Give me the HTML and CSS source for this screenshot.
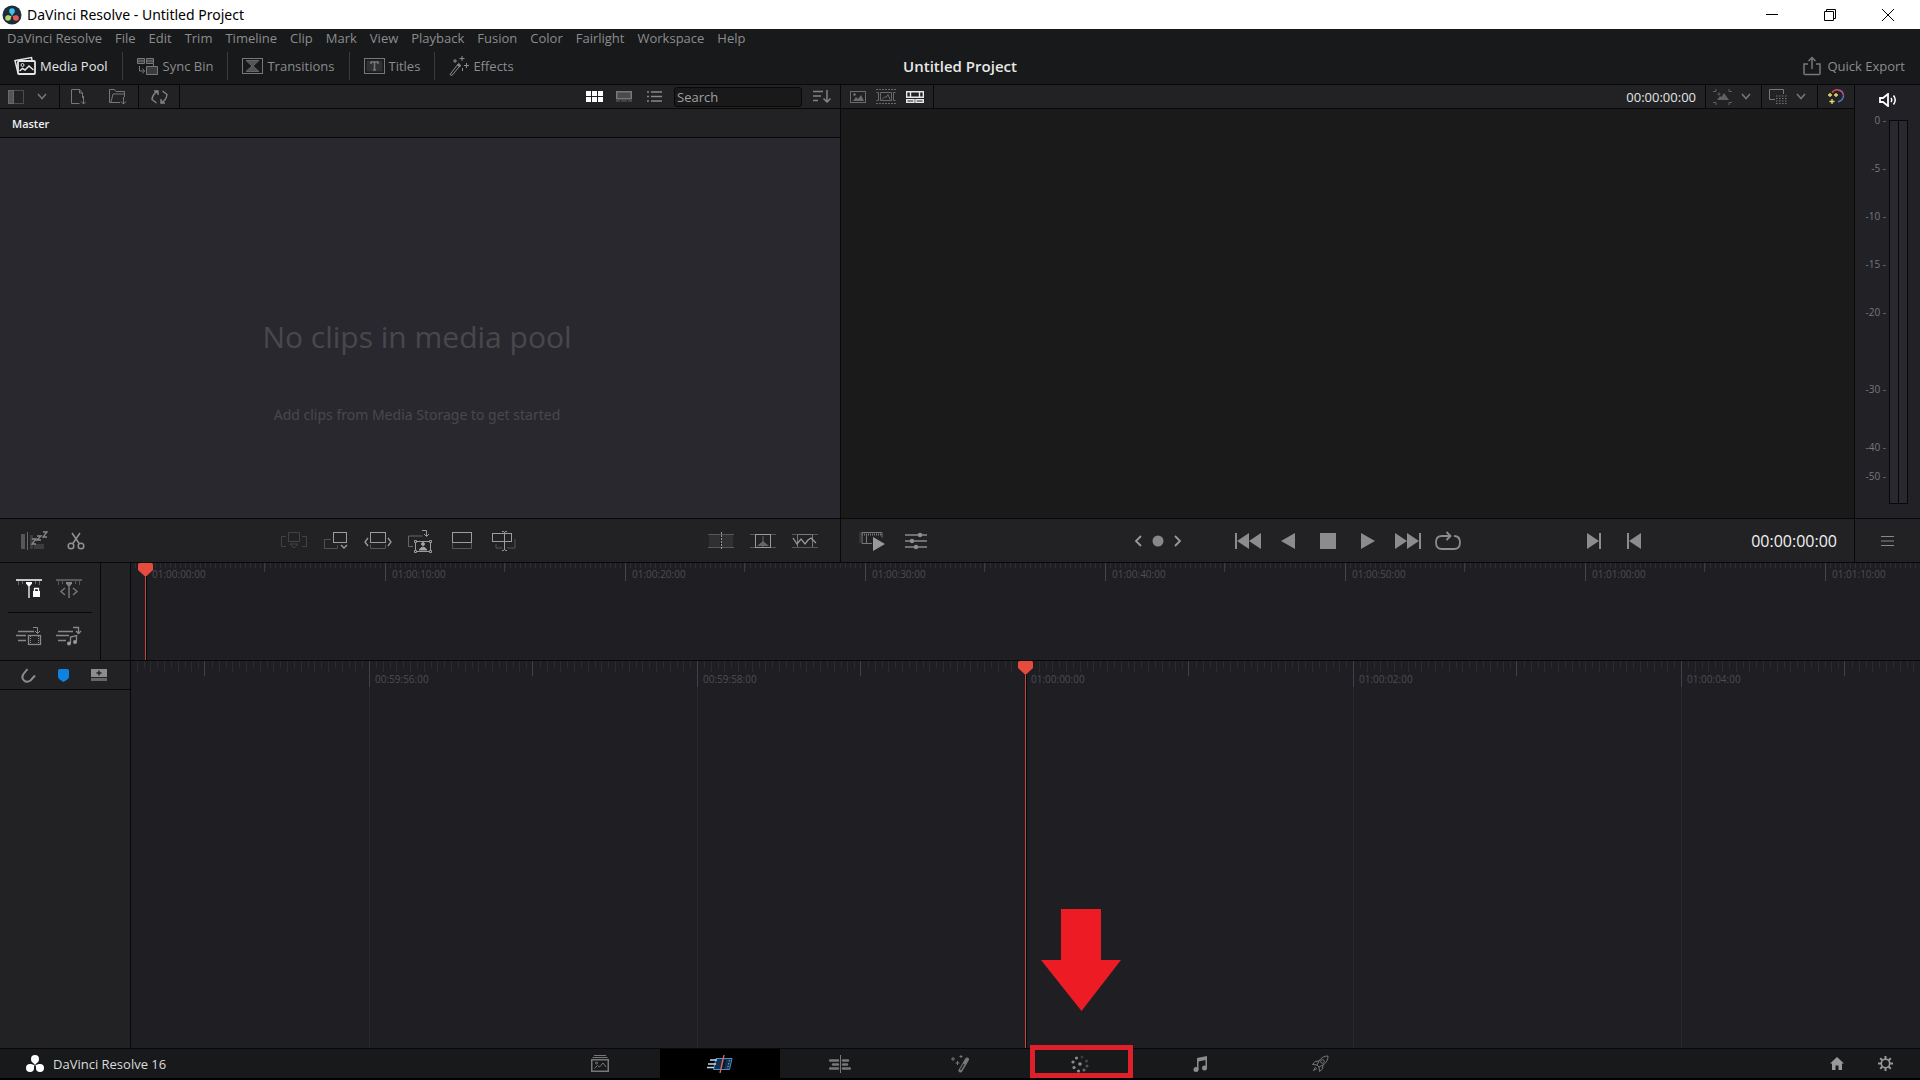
FILE: index.html
```html
<!DOCTYPE html>
<html lang="en">
<head>
<meta charset="utf-8">
<title>DaVinci Resolve - Untitled Project</title>
<link rel="stylesheet" href="styles.css">
</head>
<body>
<div class="app">
  <header class="titlebar">
    <svg class="app-logo" width="20" height="20" viewBox="0 0 20 20"><circle cx="10" cy="10" r="9.500" fill="#1d2c3a"/><circle cx="10" cy="6" r="2.800" fill="#3cc5ea"/><path d="M7.500 7L10 11l2.500-4z" fill="#3cc5ea"/><circle cx="6" cy="13" r="2.800" fill="#b9d46a"/><path d="M5 10.500L9.500 11 8 15z" fill="#b9d46a"/><circle cx="14" cy="13" r="2.800" fill="#ef5558"/><path d="M15 10.500L10.500 11 12 15z" fill="#ef5558"/></svg>
    <h1 class="window-title">DaVinci Resolve - Untitled Project</h1>
    <div class="window-buttons">
      <button aria-label="Minimize"><svg width="12" height="12" viewBox="0 0 12 12"><path d="M0 5.500h12" stroke="#000"/></svg></button>
      <button aria-label="Restore"><svg width="12" height="12" viewBox="0 0 12 12"><path d="M.5 2.500h9v9h-9zM2.500 2.500v-2h9v9h-2" stroke="#000" fill="none"/></svg></button>
      <button aria-label="Close"><svg width="12" height="12" viewBox="0 0 12 12"><path d="M0 0L12 12M12 0L0 12" stroke="#000"/></svg></button>
    </div>
  </header>

  <nav class="menubar" aria-label="Application menu">
    <button>DaVinci Resolve</button><button>File</button><button>Edit</button><button>Trim</button><button>Timeline</button><button>Clip</button><button>Mark</button><button>View</button><button>Playback</button><button>Fusion</button><button>Color</button><button>Fairlight</button><button>Workspace</button><button>Help</button>
  </nav>

  <div class="toolbar">
    <div class="toolbar-left">
      <button class="active"><svg width="22" height="20" viewBox="0 0 22 20" fill="none" stroke="currentColor"><path d="M4 17L1 4.500 17.500 1.500l.5 2.500" stroke-width="1.500"/><rect x="4" y="5" width="17" height="13" rx="1" stroke-width="1.800" fill="#17191a"/><circle cx="8.500" cy="9" r="1.500"/><path d="M5.500 15l3-2.500 2.500 1.500 4-4 4.500 4" stroke-width="1.500"/></svg>Media Pool</button>
      <button><svg width="22" height="18" viewBox="0 0 22 18" fill="#3a3b3c" stroke="#77787a"><path d="M.5 1.500h7v5h-7zM9.500 1.500h7v5h-7zM9.500 9.500h11v8h-11z"/><path d="M16.500 7v3M.5 4h7M9.500 4h7" /><path d="M2.500 9v5h5M5.500 11.500l2 2.500-2 2.500" fill="none"/></svg>Sync Bin</button>
      <button><svg width="21" height="16" viewBox="0 0 21 16" fill="none" stroke="#77787a"><rect x=".5" y=".5" width="20" height="15"/><path d="M4 2.500h13L11 8l6 5.500H4L10 8z" fill="#555" stroke="#666"/></svg>Transitions</button>
      <button><svg width="21" height="16" viewBox="0 0 21 16" fill="none" stroke="#77787a"><rect x=".5" y=".5" width="20" height="15"/><rect x="2.500" y="2.500" width="16" height="11" fill="#303132" stroke="none"/><path d="M7 6V4h7v2M10.500 4v8M9 12h3" stroke-width="1.500"/></svg>Titles</button>
      <button><svg width="20" height="20" viewBox="0 0 20 20" fill="none" stroke="currentColor"><path d="M1 18.500l8.500-11 2 1.500L3 19.500z"/><path d="M8.500 8.500l3 2" stroke-width="2"/><path d="M13 0v5M10.500 2.500h5M6 3v4M4 5h4M17.500 7v5M15 9.500h5M13.500 12v3"/></svg>Effects</button>
    </div>
    <h2 class="project-title">Untitled Project</h2>
    <button class="export"><svg width="18" height="20" viewBox="0 0 18 20" fill="none" stroke="#77787a" stroke-width="1.500"><path d="M5 8H1v9.500q0 1 1 1h14q1 0 1-1V8h-4M9 13V2M5.500 5L9 1.500 12.500 5"/></svg>Quick Export</button>
  </div>

  <main class="workspace">
    <section class="media" aria-label="Media pool">
      <div class="subbar">
        <div class="cell cell-bins">
          <button aria-label="Bin list"><svg width="16" height="14" viewBox="0 0 16 14" fill="none" stroke="#68686b"><rect x=".5" y=".5" width="15" height="13" stroke="#4c4c50"/><rect x=".5" y=".5" width="5" height="13" fill="#555558"/></svg></button>
          <button aria-label="Bin options"><svg class="chev" width="10" height="7" viewBox="0 0 10 7"><path d="M1 1l4 4.500L9 1" fill="none" stroke="#77777a" stroke-width="1.500"/></svg></button>
        </div>
        <div class="cell cell-import">
          <button aria-label="Import media"><svg width="15" height="16" viewBox="0 0 15 16" fill="none" stroke="#77777a"><path d="M8.500 14.500h-8V.5h8l3 3.500v5M8.500.5V4h3M12.500 7v8M10 12.500l2.500 2.500 2.500-2.500"/></svg></button>
          <button aria-label="Import folder"><svg width="18" height="16" viewBox="0 0 18 16" fill="none" stroke="#77777a"><path d="M11 13.500H.5V.5h5l1.500 2h8.500V8M2 13L4 5h12M14.500 8v7M12 12.500l2.500 2.500 2.500-2.500"/></svg></button>
        </div>
        <div class="cell cell-sync">
          <button aria-label="Sync"><svg width="17" height="14" viewBox="0 0 17 14" fill="none" stroke="#838386" stroke-width="1.400"><path d="M5.500 13L1 9.500Q1.500 4 6.500 1.500M3 1h4v4M11.500 1L16 4.500Q15.500 10 10.500 12.500M14 13h-4V9"/></svg></button>
        </div>
        <div class="views">
          <button aria-label="Thumbnail view"><svg width="17" height="11" viewBox="0 0 17 11" fill="#fff"><path d="M0 0h5v5H0zM6 0h5v5H6zM12 0h5v5h-5zM0 6h5v5H0zM6 6h5v5H6zM12 6h5v5h-5z"/></svg></button>
          <button aria-label="Strip view"><svg width="16" height="11" viewBox="0 0 16 11"><rect x=".75" y=".75" width="14.500" height="7" fill="#4a4a4d" stroke="#77777a" stroke-width="1.500"/><path d="M0 10h4M5 10h6M12 10h4" stroke="#68686b"/></svg></button>
          <button aria-label="List view"><svg width="15" height="11" viewBox="0 0 15 11" stroke="#88888b" stroke-width="1.500"><path d="M0 1h2M4 1h11M0 5.500h2M4 5.500h11M0 10h2M4 10h11"/></svg></button>
        </div>
        <input class="search" type="text" placeholder="Search" aria-label="Search">
        <button class="sort" aria-label="Sort"><svg width="18" height="13" viewBox="0 0 18 13" fill="none" stroke="#838386" stroke-width="1.500"><path d="M0 1.500h10M0 6h8M0 10.500h5M14 0v11.500M10.500 8.500L14 12l3.500-3.500"/></svg></button>
      </div>
      <h3 class="bin-name">Master</h3>
      <div class="empty">
        <p class="empty-title">No clips in media pool</p>
        <p class="empty-note">Add clips from Media Storage to get started</p>
      </div>
    </section>

    <section class="viewer" aria-label="Viewer">
      <div class="subbar">
        <div class="cell cell-modes">
          <button aria-label="Source clip"><svg width="16" height="12" viewBox="0 0 16 12" fill="none" stroke="#6b6b6e"><rect x=".5" y=".5" width="15" height="11"/><path d="M3 10l3-4 2 2 3-4 3 6z" fill="#6b6b6e" stroke="none"/><circle cx="4.500" cy="3.500" r="1" fill="#6b6b6e"/></svg></button>
          <button aria-label="Source tape"><svg width="20" height="15" viewBox="0 0 20 15" fill="none" stroke="#68686b"><path d="M0 .5h20M0 14.500h20" stroke-dasharray="2 1"/><path d="M.5 3.500h2v8h-2M19.500 3.500h-2v8h2M4.500 3.500h11v8h-11zM6 10.500l3-3 1 1 2-3 2 5"/></svg></button>
          <button aria-label="Timeline"><svg width="18" height="12" viewBox="0 0 18 12" fill="none" stroke="#e8e8e8" stroke-width="1.400"><path d="M.7.7h16.600v5.600H.7zM4.500.7v5.600M13.500.7v5.600M.7 8.700h7.300v2.600H.7zM10 8.700h7.300v2.600H10z"/></svg></button>
        </div>
        <output class="timecode-small">00:00:00:00</output>
        <div class="cell cell-drop">
          <button aria-label="Transform"><svg width="19" height="16" viewBox="0 0 19 16" fill="none" stroke="#606063"><path d="M0 2.500h3V0M19 2.500h-3V0M0 13.500h3V16M19 13.500h-3V16"/><path d="M4 11l3-4 1.500 1L11 4l5 7z" fill="#606063" stroke="none"/><circle cx="6" cy="5" r="1"/></svg></button>
          <button aria-label="Transform options"><svg class="chev" width="10" height="7" viewBox="0 0 10 7"><path d="M1 1l4 4.500L9 1" fill="none" stroke="#77777a" stroke-width="1.500"/></svg></button>
        </div>
        <div class="cell cell-drop">
          <button aria-label="Overlay"><svg width="18" height="15" viewBox="0 0 18 15" fill="none" stroke="#77777a"><path d="M6 10.500H.5V.5h14V5"/><path d="M7 7h11M7 9.500h11M7 12h11M7 14.500h11" stroke-dasharray="1.500 1.500"/></svg></button>
          <button aria-label="Overlay options"><svg class="chev" width="10" height="7" viewBox="0 0 10 7"><path d="M1 1l4 4.500L9 1" fill="none" stroke="#77777a" stroke-width="1.500"/></svg></button>
        </div>
        <div class="cell cell-auto">
          <button aria-label="Auto color"><svg width="18" height="16" viewBox="0 0 18 16" fill="none" stroke-width="1.500"><path d="M5 3.500Q8 0 11 1" stroke="#e14b38"/><path d="M11 1Q16 1.500 16.500 6.500" stroke="#b254a4"/><path d="M16.500 6.500Q16.500 11 11 13" stroke="#4c78c4"/><path d="M3 4v4M1 6h4M9 4v4M7 6h4M5 10v5M2.500 12.500h5" stroke="#e7dd68" stroke-width="1.300"/></svg></button>
        </div>
      </div>
      <div class="screen"></div>
    </section>

    <aside class="audio" aria-label="Audio level">
      <button class="speaker" aria-label="Mute"><svg width="18" height="14" viewBox="0 0 18 14" fill="none" stroke="#fff" stroke-width="1.800"><path d="M1 5v4h3l5 4V1L4 5z"/><path d="M12 5q1.500 2 0 4M14.500 2.500q3.500 4.500 0 9" stroke-width="1.500"/></svg></button>
      <div class="meter">
        <div class="scale"><span>0 -</span><span>-5 -</span><span>-10 -</span><span>-15 -</span><span>-20 -</span><span>-30 -</span><span>-40 -</span><span>-50 -</span></div>
        <div class="bars"><i></i><i></i></div>
      </div>
    </aside>
  </main>

  <div class="controls">
    <div class="edit-tools">
      <div class="group">
        <button aria-label="Boring detector"><svg width="28" height="20" viewBox="0 0 28 20" fill="none" stroke="#69696c"><path d="M1 3h4v15H1z" fill="#565659" stroke="none"/><path d="M7.500 1v18"/><path d="M10 4h3v14h-3zM14 13h10v5H14z" fill="#3c3c3f" stroke="none"/><path d="M12 8h4l-4 5h4M17 5h4l-4 4h4M23 1h4l-4 5h4" stroke="#88888b" stroke-width="1.300"/></svg></button>
        <button aria-label="Split clips"><svg width="18" height="18" viewBox="0 0 18 18" fill="none" stroke="#919194" stroke-width="1.500"><circle cx="4" cy="14" r="2.800"/><circle cx="14" cy="14" r="2.800"/><path d="M5 1l7.500 11M13 1L5.500 12"/></svg></button>
      </div>
      <div class="group">
        <button aria-label="Smart insert"><svg width="26" height="18" viewBox="0 0 26 18" fill="none" stroke="#424245"><path d="M7.500.5h11v9h-11zM5 4.500H.5v10H5M21 4.500h4.500v10H21M9 12l4 4 4-4z"/></svg></button>
        <button aria-label="Append"><svg width="26" height="18" viewBox="0 0 26 18" fill="none" stroke="#9c9c9f"><rect x="10.500" y=".5" width="13" height="10"/><path d="M8 7.500H1.500v9h13V13" stroke="#4f4f52"/><path d="M18 13l3 3 3-3" stroke-width="1.300"/></svg></button>
        <button aria-label="Ripple overwrite"><svg width="28" height="18" viewBox="0 0 28 18" fill="none" stroke="#9c9c9f"><rect x="6.500" y=".5" width="15" height="10"/><path d="M6.500 12.500v4h15v-4" stroke="#55555a"/><path d="M4 6L1 10l3 4M24 6l3 4-3 4" stroke-width="1.300"/></svg></button>
        <button aria-label="Close up"><svg width="26" height="24" viewBox="0 0 26 24" fill="none" stroke="#9c9c9f"><path d="M6 17.500H1.500V7h14" stroke="#66666a"/><path d="M15 1.500h4.500V7M17 5l2.500 2.500L22 5"/><rect x="8.500" y="12.500" width="15" height="10"/><circle cx="16" cy="15" r="1.500" fill="#aaa"/><path d="M12 21q4-6 8 0z" fill="#aaa"/><path d="M7.500 11.500h2v2h-2zM22.500 11.500h2v2h-2zM7.500 21.500h2v2h-2zM22.500 21.500h2v2h-2z" fill="#222225"/></svg></button>
        <button aria-label="Place on top"><svg width="22" height="18" viewBox="0 0 22 18" fill="none" stroke="#9c9c9f"><rect x="1.500" y=".5" width="19" height="10"/><path d="M1.500 11v5.500h19V11" stroke="#55555a"/></svg></button>
        <button aria-label="Source overwrite"><svg width="26" height="20" viewBox="0 0 26 20" fill="none" stroke="#9c9c9f"><rect x="1.500" y="2.500" width="19" height="8"/><path d="M5 13v4h6M16 17h8V8" stroke="#55555a"/><path d="M13.500 1v18M11 .5h1q1 0 1.500 1 .5-1 1.500-1h1M11 19.500h1q1 0 1.500-1 .5 1 1.500 1h1"/></svg></button>
      </div>
      <div class="group">
        <button aria-label="Cut"><svg width="26" height="18" viewBox="0 0 26 18" fill="none"><path d="M1 3h11v12H1z" fill="#303033"/><path d="M14 3h11v12H14z" fill="#303033"/><path d="M0 2.500h26M0 15.500h26" stroke="#55555a"/><path d="M13.500 0v18" stroke="#99999c" stroke-dasharray="2 1"/></svg></button>
        <button aria-label="Dissolve"><svg width="26" height="18" viewBox="0 0 26 18" fill="none" stroke="#99999c"><path d="M0 2.500h26M0 15.500h26" stroke="#55555a"/><rect x="5.500" y="2.500" width="15" height="13"/><path d="M7 14l6-5 6 5z" fill="#66666a" stroke="none"/><path d="M13 4v11" stroke="#66666a"/></svg></button>
        <button aria-label="Smooth cut"><svg width="26" height="18" viewBox="0 0 26 18" fill="none" stroke="#99999c"><path d="M0 2.500h26M0 15.500h26" stroke="#55555a"/><path d="M5.500 15V2.500h15V15" stroke="#77777a"/><path d="M1 6l4 6 4-5 4 5 3-4 3-2 5 5" stroke-width="1.300"/></svg></button>
      </div>
    </div>
    <div class="transport">
      <div class="group wide">
        <button aria-label="Fast review"><svg width="26" height="20" viewBox="0 0 26 20" fill="none" stroke="#77777a"><path d="M3 1.500h20v5M3 1v11.500h10M7.500 4v8"/><path d="M3 3.500h20" stroke-dasharray="1 1" stroke-width="2"/><path d="M1 1v11" stroke="#444"/><path d="M14 6l12 7-12 7z" fill="#99999c" stroke="none"/></svg></button>
        <button aria-label="Tools"><svg width="22" height="18" viewBox="0 0 22 18" stroke="#8c8c8f" stroke-width="1.500" fill="#9c9c9f"><path d="M0 3h22M0 9h22M0 15h22"/><circle cx="15" cy="3" r="1.500"/><circle cx="7" cy="9" r="1.500"/><circle cx="11" cy="15" r="1.500"/></svg></button>
      </div>
      <div class="group jog">
        <button aria-label="Previous edit"><svg width="8" height="12" viewBox="0 0 8 12" fill="none" stroke="#99999c" stroke-width="1.800"><path d="M7 1L2 6l5 5"/></svg></button>
        <button aria-label="Jog"><svg width="12" height="12" viewBox="0 0 12 12"><circle cx="6" cy="6" r="5.500" fill="#88888b"/></svg></button>
        <button aria-label="Next edit"><svg width="8" height="12" viewBox="0 0 8 12" fill="none" stroke="#99999c" stroke-width="1.800"><path d="M1 1l5 5-5 5"/></svg></button>
      </div>
      <div class="group play">
        <button aria-label="Go to start"><svg width="26" height="16" viewBox="0 0 26 16" fill="#8c8c8f"><path d="M0 0h2v16H0zM2 8L14 0v16zM14 8L26 0v16z"/></svg></button>
        <button aria-label="Play reverse"><svg width="14" height="16" viewBox="0 0 14 16" fill="#8c8c8f"><path d="M0 8L14 0v16z"/></svg></button>
        <button aria-label="Stop"><svg width="16" height="16" viewBox="0 0 16 16" fill="#8c8c8f"><path d="M0 0h16v16H0z"/></svg></button>
        <button aria-label="Play"><svg width="14" height="16" viewBox="0 0 14 16" fill="#8c8c8f"><path d="M0 0l14 8-14 8z"/></svg></button>
        <button aria-label="Go to end"><svg width="26" height="16" viewBox="0 0 26 16" fill="#8c8c8f"><path d="M24 0h2v16h-2zM0 0l12 8-12 8zM12 0l12 8-12 8z"/></svg></button>
        <button aria-label="Loop"><svg width="26" height="20" viewBox="0 0 26 20" fill="none" stroke="#8c8c8f" stroke-width="1.800"><path d="M19 5q6 0 6 6.500T19 18H7q-6 0-6-6.500T7 5h8M11.500 1L15.500 5l-4 4"/></svg></button>
      </div>
      <div class="group play">
        <button aria-label="Next clip"><svg width="14" height="16" viewBox="0 0 14 16" fill="#8c8c8f"><path d="M0 0l12 8-12 8zM12 0h2v16h-2z"/></svg></button>
        <button aria-label="Previous clip"><svg width="14" height="16" viewBox="0 0 14 16" fill="#8c8c8f"><path d="M14 0L2 8l12 8zM0 0h2v16H0z"/></svg></button>
      </div>
      <output class="timecode">00:00:00:00</output>
    </div>
    <div class="options">
      <button aria-label="Timeline options"><svg width="13" height="10" viewBox="0 0 13 10" stroke="#88888b"><path d="M0 .5h13M0 5h13M0 9.500h13"/></svg></button>
    </div>
  </div>

  <section class="overview" aria-label="Timeline overview">
    <div class="timeline-tools">
      <div class="tool-row">
        <button aria-label="Lock playhead"><svg width="26" height="20" viewBox="0 0 26 20" fill="none" stroke="#fff"><path d="M0 1h26" stroke-width="1.500"/><path d="M2.500 2v4M6.500 2v3M19.500 2v3M23.500 2v4" stroke="#66666a"/><path d="M10 3h6v1.500L14 7h-2l-2-2.500z" fill="#fff" stroke="none"/><path d="M13 4v15" stroke-width="1.300"/><path d="M17 12h7v6h-7z" fill="#fff" stroke="none"/><path d="M18.500 12V9.500h4V12" stroke-width="1.300"/></svg></button>
        <button aria-label="Free playhead"><svg width="26" height="20" viewBox="0 0 26 20" fill="none" stroke="#77777a"><path d="M0 1h26" stroke-width="1.300"/><path d="M2.500 2v4M6.500 2v3M19.500 2v3M23.500 2v4" stroke="#55555a"/><path d="M10 3h6v1.500L14 7h-2l-2-2.500z" fill="#88888b" stroke="none"/><path d="M13 4v15M9 9l-4 3.500L9 16M17 9l4 3.500-4 3.500" stroke-width="1.500"/></svg></button>
      </div>
      <div class="tool-row">
        <button aria-label="Add video only"><svg width="26" height="20" viewBox="0 0 26 20" fill="none" stroke="#88888b"><path d="M2 5.500h16M0 9.500h10M2 14.500h8" stroke-width="1.500"/><path d="M17 1.500h4.500V7M19 5l2.500 2.500L24 5"/><rect x="12.500" y="9.500" width="12" height="9" stroke-width="1.300"/><path d="M14.500 10v8M22.500 10v8" stroke-dasharray="1 1"/></svg></button>
        <button aria-label="Add audio only"><svg width="26" height="20" viewBox="0 0 26 20" fill="none" stroke="#88888b"><path d="M2 5.500h15M0 9.500h13M2 14.500h8" stroke-width="1.500"/><path d="M17 1.500h5.500V7M20 5l2.500 2.500L25 5M14.500 17v-6l6-1.500V15" stroke-width="1.300"/><circle cx="13" cy="17.500" r="2" fill="#99999c" stroke="none"/><circle cx="19" cy="16" r="2" fill="#99999c" stroke="none"/></svg></button>
      </div>
    </div>
    <div class="track-gutter"></div>
    <div class="ruler ruler-full">
      <svg class="ticks" width="100%" height="20"><defs><pattern id="full" x="14" y="0" width="240" height="20" patternUnits="userSpaceOnUse"><path d="M.5 0v18" stroke="#45454a"/><path d="M119.500 0v9" stroke="#3a3a3f"/><path d="M5 2.500h235" stroke="#2e2e32" stroke-width="5" stroke-dasharray="1 4"/></pattern></defs><rect width="100%" height="20" fill="url(#full)"/></svg>
      <div class="labels"><span>01:00:00:00</span><span>01:00:10:00</span><span>01:00:20:00</span><span>01:00:30:00</span><span>01:00:40:00</span><span>01:00:50:00</span><span>01:01:00:00</span><span>01:01:10:00</span></div>
      <div class="playhead"><svg width="15" height="14" viewBox="0 0 15 14"><path d="M0 1.500Q0 0 1.500 0h12Q15 0 15 1.500V7l-7.500 7L0 7z" fill="#e64b3d"/></svg></div>
    </div>
  </section>

  <section class="detail" aria-label="Timeline">
    <div class="tracks">
      <div class="track-tools">
        <button aria-label="Snapping"><svg width="15" height="15" viewBox="0 0 15 15" fill="none" stroke="#8c8c8f" stroke-width="2"><path d="M6.500 1L2.500 6Q0 10 3 12.500t6.500 0L14 7.500"/></svg></button>
        <button aria-label="Markers"><svg width="11" height="13" viewBox="0 0 11 13" fill="#0d82e0"><path d="M0 1.500Q0 0 1.500 0h8Q11 0 11 1.500V8q0 2-5.500 5Q0 10 0 8z"/></svg></button>
        <button aria-label="Add track"><svg width="16" height="12" viewBox="0 0 16 12"><path d="M0 0h16v8H0z" fill="#8c8c8f"/><path d="M0 9h16v3H0z" fill="#66666a"/><path d="M8 1.500v5M5.500 4h5" stroke="#222225" stroke-width="1.500"/></svg></button>
      </div>
    </div>
    <div class="ruler ruler-zoom">
      <svg class="ticks" width="100%" height="100%"><defs>
        <pattern id="zoom" x="238" y="0" width="328" height="26" patternUnits="userSpaceOnUse"><path d="M.5 0v26M163.500 0v15" stroke="#404045"/><path d="M7.500 0v7M21.500 0v7M34.500 0v7M48.500 0v7M62.500 0v7M75.500 0v7M89.500 0v7M103.500 0v7M116.500 0v7M130.500 0v7M144.500 0v7M157.500 0v7M171.500 0v7M185.500 0v7M198.500 0v7M212.500 0v7M226.500 0v7M239.500 0v7M253.500 0v7M267.500 0v7M280.500 0v7M294.500 0v7M308.500 0v7M321.500 0v7M14.500 0v11M27.500 0v11M41.500 0v11M55.500 0v11M68.500 0v11M82.500 0v11M96.500 0v11M109.500 0v11M123.500 0v11M137.500 0v11M150.500 0v11M178.500 0v11M191.500 0v11M205.500 0v11M219.500 0v11M232.500 0v11M246.500 0v11M260.500 0v11M273.500 0v11M287.500 0v11M301.500 0v11M314.500 0v11" stroke="#2c2c30"/></pattern>
        <pattern id="seconds" x="238" y="0" width="328" height="26" patternUnits="userSpaceOnUse"><path d="M.5 0v26" stroke="#28282c"/></pattern></defs>
        <rect width="100%" height="100%" fill="url(#seconds)"/><rect width="100%" height="26" fill="url(#zoom)"/></svg>
      <div class="labels"><span>00:59:56:00</span><span>00:59:58:00</span><span>01:00:00:00</span><span>01:00:02:00</span><span>01:00:04:00</span></div>
      <div class="playhead"><svg width="15" height="14" viewBox="0 0 15 14"><path d="M0 1.500Q0 0 1.500 0h12Q15 0 15 1.500V7l-7.500 7L0 7z" fill="#e64b3d"/></svg></div>
    </div>
  </section>

  <footer class="pagebar">
    <div class="brand"><svg width="18" height="17" viewBox="0 0 18 17" fill="#fff"><circle cx="9" cy="4" r="4"/><path d="M5.500 6L9 10l3.500-4z"/><circle cx="4" cy="13" r="4"/><path d="M3 9l5.500 1L7 15z"/><circle cx="14" cy="13" r="4"/><path d="M15 9l-5.500 1L11 15z"/></svg>DaVinci Resolve 16</div>
    <nav class="pages" aria-label="Pages">
      <a href="#media" aria-label="Media"><svg width="18" height="17" viewBox="0 0 18 17" fill="none" stroke="#77777a"><path d="M3 .5h12M1.500 2.500h15"/><rect x=".75" y="4.750" width="16.500" height="11.500" stroke-width="1.500"/><path d="M3.500 13.500l3-3 2 1.500 3.500-4 3 4"/><circle cx="5.500" cy="8" r="1"/></svg></a>
      <a href="#cut" class="current" aria-label="Cut"><svg width="26" height="18" viewBox="0 0 26 18" fill="none"><path d="M9 3.500h16l-2.500 11H6.500z" fill="#14304d" stroke="#4a8fc9"/><path d="M18 5l-2 9" stroke="#0a1624" stroke-width="2"/><path d="M22.500 5l-2 9" stroke="#6aaede" stroke-dasharray="1.500 1.500"/><path d="M3 5h7M1 9h8M0 12.500h7" stroke="#c4d8ea" stroke-width="1.300"/><path d="M17 0l-4 18" stroke="#e36a5e" stroke-width="1.300"/></svg></a>
      <a href="#edit" aria-label="Edit"><svg width="22" height="18" viewBox="0 0 22 18" stroke="#77777a" fill="none"><path d="M1 5.500h8M4 9.500h5M1 13.500h8M14 5.500h5M14 9.500h4M14 13.500h7" stroke-width="2.500" stroke-linecap="round"/><path d="M11.500 0v18"/></svg></a>
      <a href="#fusion" aria-label="Fusion"><svg width="20" height="18" viewBox="0 0 20 18" stroke="#77777a" fill="none"><path d="M10.500 15.500L17 4.500" stroke-width="4" stroke-linecap="round"/><path d="M10.500 15L14 9" stroke="#2b2c2e" stroke-width="1.500"/><path d="M3 2v4M1 4h4M11 0v3M9.500 1.500h3M7.500 6v4M5.500 8h4"/></svg></a>
      <a href="#color" class="marked" aria-label="Color"><svg width="18" height="18" viewBox="0 0 18 18" fill="#8c8c8f"><circle cx="9" cy="9" r="1.800"/><circle cx="5.500" cy="3" r="1.600"/><circle cx="2" cy="7" r="1.600"/><circle cx="3" cy="12.500" r="1.600"/><circle cx="7.500" cy="16" r="1.600"/><circle cx="13" cy="15" r="1.500" opacity=".7"/><circle cx="16" cy="11" r="1.500" opacity=".5"/><circle cx="15.500" cy="6" r="1.500" opacity=".4"/><circle cx="11" cy="2" r="1.500" opacity=".3"/></svg></a>
      <a href="#fairlight" aria-label="Fairlight"><svg width="14" height="16" viewBox="0 0 14 16" fill="#8c8c8f"><path d="M4 2l10-2v12h-1.500V4l-7 1.500V14H4z"/><circle cx="3" cy="13.500" r="2.500"/><circle cx="11.500" cy="12" r="2.500"/></svg></a>
      <a href="#deliver" aria-label="Deliver"><svg width="17" height="17" viewBox="0 0 17 17" fill="none" stroke="#77777a"><path d="M16 1q-6 0-9 5l-2 4 2 2 4-2q5-3 5-9zM7 6L3 6.500.5 9.500 5 10M11 10l-.5 4-3 2.500L7 12M3.500 12l-2 3.500L5 13.500"/><circle cx="10.500" cy="6.500" r="1.800"/></svg></a>
    </nav>
    <div class="system">
      <button aria-label="Project manager"><svg width="14" height="13" viewBox="0 0 14 13" fill="#99999c"><path d="M7 0l7 6.500h-2V13H8.500V8.500h-3V13H2V6.500H0z"/></svg></button>
      <button aria-label="Project settings"><svg width="15" height="15" viewBox="0 0 15 15" fill="none" stroke="#99999c"><circle cx="7.500" cy="7.500" r="4.200" stroke-width="1.600"/><path d="M7.500 0v3M7.500 12v3M0 7.500h3M12 7.500h3M2.200 2.200l2.100 2.100M10.700 10.700l2.100 2.100M2.200 12.800l2.100-2.100M10.700 4.300l2.100-2.100" stroke-width="2"/></svg></button>
    </div>
  </footer>
  <svg class="pointer" width="80" height="102" viewBox="0 0 80 102" aria-hidden="true"><path d="M20 0h40v51h20L40.500 102 0 51h20z" fill="#ed1c24"/></svg>
</div>
</body>
</html>
```
FILE: styles.css
```css
*, *::before, *::after { box-sizing: border-box; }

body {
  margin: 0;
  background: #1f1e22;
  color: #8c8c8f;
  font-family: "Open Sans", "Noto Sans", sans-serif;
  font-size: 13px;
}

h1, h2, h3, p { margin: 0; font-weight: 400; }

button {
  display: flex;
  align-items: center;
  justify-content: center;
  margin: 0;
  padding: 0;
  border: 0;
  background: none;
  color: inherit;
  font: inherit;
}

svg { display: block; flex: none; }

.app {
  position: relative;
  display: grid;
  grid-template-columns: minmax(0, 1fr);
  grid-template-rows: 29px 21px 35px minmax(280px, 434fr) 44px 98px minmax(200px, 388fr) 31px;
  min-height: 100vh;
}

/* Window chrome */
.titlebar {
  display: flex;
  align-items: center;
  padding-left: 2px;
  background: #fff;
  color: #000;
}
.window-title { flex: 1; margin-left: 5px; font-family: "Noto Sans", sans-serif; font-size: 14px; }
.window-buttons { display: flex; margin-right: 3px; }
.window-buttons button { width: 58px; height: 28px; }

.menubar {
  display: flex;
  align-items: center;
  gap: 13px;
  padding: 0 0 4px 7px;
  background: #17191a;
}

.toolbar {
  display: grid;
  grid-template-columns: 1fr auto 1fr;
  align-items: center;
  padding-bottom: 3px;
  background: #17191a;
  border-bottom: 1px solid #08080a;
}
.toolbar-left { display: flex; }
.toolbar-left button {
  height: 28px;
  gap: 4px;
  padding: 0 14px;
  border-left: 1px solid #3a3b3d;
}
.toolbar-left button:first-child { border-left: 0; }
.toolbar-left .active { color: #e6e6e6; }
.project-title { color: #e8e8e8; font-size: 15px; font-weight: 600; }
.export { justify-self: end; gap: 6px; margin-right: 15px; }

/* Media pool, viewer and meter */
.workspace,
.controls {
  display: grid;
  grid-template-columns: 841fr 1014fr 65px;
  border-bottom: 1px solid #08080a;
}

.media,
.viewer { display: flex; flex-direction: column; min-width: 0; border-right: 1px solid #08080a; }

.subbar {
  display: flex;
  align-items: center;
  height: 24px;
  background: #222225;
  border-bottom: 1px solid #08080a;
}
.cell {
  display: flex;
  align-items: center;
  justify-content: space-around;
  height: 23px;
  border-right: 1px solid #08080a;
}
.cell-bins { width: 60px; padding: 0 6px 0 2px; }
.cell-import { width: 79px; }
.cell-sync { width: 41px; }
.views { display: flex; margin-left: auto; }
.views button { width: 30px; }
.search {
  width: 128px;
  height: 20px;
  margin: 0 11px 0 5px;
  padding: 0 2px;
  border: 1px solid #08080a;
  border-radius: 3px;
  background: #19191a;
  color: #a0a0a3;
  font: inherit;
}
.search::placeholder { color: #a0a0a3; opacity: 1; }
.sort { margin-right: 9px; }

.bin-name {
  height: 29px;
  padding-left: 12px;
  background: #222225;
  border-bottom: 1px solid #08080a;
  color: #f0f0f0;
  font-size: 11px;
  font-weight: 600;
  line-height: 30px;
}
.empty {
  display: flex;
  flex: 1;
  flex-direction: column;
  align-items: center;
  justify-content: center;
  gap: 46px;
  padding: 88px 6px 0 0;
  background: #29282e;
  color: #48484c;
}
.empty-title { font-size: 30px; line-height: 40px; }
.empty-note { font-family: "Noto Sans", sans-serif; font-size: 14px; line-height: 24px; }

.cell-modes { width: 93px; padding: 0 4px; }
.timecode-small { margin-left: auto; margin-right: 9px; color: #e4e4e4; font-size: 13px; }
.cell-drop,
.cell-auto { border-left: 1px solid #08080a; border-right: 0; }
.cell-drop { width: 56px; padding: 0 6px 0 2px; }
.cell-auto { width: 37px; }
.screen { flex: 1; background: #1a1a1a; }

.audio {
  display: flex;
  flex-direction: column;
  padding-bottom: 14px;
  background: #222226;
}
.speaker { height: 27px; padding-top: 2px; }
.meter { display: flex; flex: 1; }
.scale {
  display: grid;
  grid-template-rows: 48fr 48fr 48fr 48fr 77fr 58fr 29fr 36fr;
  width: 31px;
  color: #77777a;
  font-size: 10px;
  line-height: 16px;
  text-align: right;
  white-space: pre;
}
.bars { display: flex; width: 19px; margin: 8px 0 0 3px; border: 1px solid #08080a; }
.bars i { flex: 1; background: #29282e; }
.bars i + i { border-left: 1px solid #08080a; }

/* Edit and transport controls */
.controls { background: #222225; }
.edit-tools {
  display: flex;
  align-items: center;
  justify-content: space-between;
  padding: 0 14px 0 13px;
  border-right: 1px solid #08080a;
}
.group { display: flex; align-items: center; }
.group button { width: 42px; height: 36px; }
.transport {
  display: grid;
  grid-template-columns: 88px 190fr 60px 40fr 240px 107fr 80px 97fr auto;
  align-items: center;
  padding: 0 17px 0 9px;
  border-right: 1px solid #08080a;
}
.transport > :nth-child(2) { grid-column: 3; }
.transport > :nth-child(3) { grid-column: 5; }
.transport > :nth-child(4) { grid-column: 7; }
.transport > :nth-child(5) { grid-column: 9; }
.wide button { width: 44px; }
.jog button { width: 20px; }
.play button { width: 40px; }
.timecode { color: #f2f2f2; font-size: 16px; }
.options { display: flex; align-items: center; justify-content: center; }

/* Timelines */
.overview {
  display: grid;
  grid-template-columns: 101px 30px minmax(0, 1fr);
  border-bottom: 1px solid #08080a;
}
.timeline-tools {
  display: grid;
  grid-template-rows: 1fr 1fr;
  padding: 0 8px;
  background: #222225;
  border-right: 1px solid #08080a;
}
.tool-row { display: flex; align-items: center; padding: 4px 0 0 1px; }
.tool-row + .tool-row { padding-top: 0; border-top: 1px solid #08080a; }
.tool-row button { width: 40px; }
.track-gutter { background: #222225; border-right: 1px solid #08080a; }

.detail {
  display: grid;
  grid-template-columns: 131px minmax(0, 1fr);
  border-bottom: 1px solid #08080a;
}
.tracks { background: #222225; border-right: 1px solid #08080a; }
.track-tools {
  display: flex;
  align-items: center;
  height: 29px;
  padding-left: 11px;
  border-bottom: 1px solid #08080a;
}
.track-tools button { width: 35px; }

.ruler { position: relative; overflow: hidden; }
.ticks { position: absolute; inset: 0; }
.labels {
  position: relative;
  display: flex;
  color: #4d4d52;
  font-size: 10px;
  line-height: 14px;
}
.labels span { flex: none; }
.ruler-full .labels { padding: 4px 0 0 21px; }
.ruler-full .labels span { width: 240px; }
.ruler-zoom .labels { padding: 11px 0 0 244px; }
.ruler-zoom .labels span { width: 328px; }

.playhead { position: absolute; top: 0; bottom: 0; width: 15px; }
.playhead::after {
  content: "";
  position: absolute;
  top: 13px;
  bottom: 0;
  left: 7px;
  width: 2px;
  background: #c04a3e;
  border-right: 1px solid #08080a;
}
.ruler-full .playhead { left: 7px; }
.ruler-zoom .playhead { left: 887px; }

/* Page switcher */
.pagebar {
  display: grid;
  grid-template-columns: 1fr auto 1fr;
  background: #17191a;
  border-bottom: 2px solid #000;
}
.brand { display: flex; align-items: center; gap: 9px; padding-left: 26px; color: #dcdcdc; font-size: 13px; }
.pages { display: flex; }
.pages a { display: flex; align-items: center; justify-content: center; width: 120px; }
.pages .current { background: #000; }
.pages .marked { position: relative; }
.marked::after {
  content: "";
  position: absolute;
  top: -4px;
  left: 10px;
  width: 103px;
  height: 33px;
  border: 5px solid #df1f2a;
}
.system { display: flex; justify-content: flex-end; padding-right: 10px; }
.system button { width: 49px; }

.pointer { position: absolute; right: 799px; bottom: 69px; }
```
